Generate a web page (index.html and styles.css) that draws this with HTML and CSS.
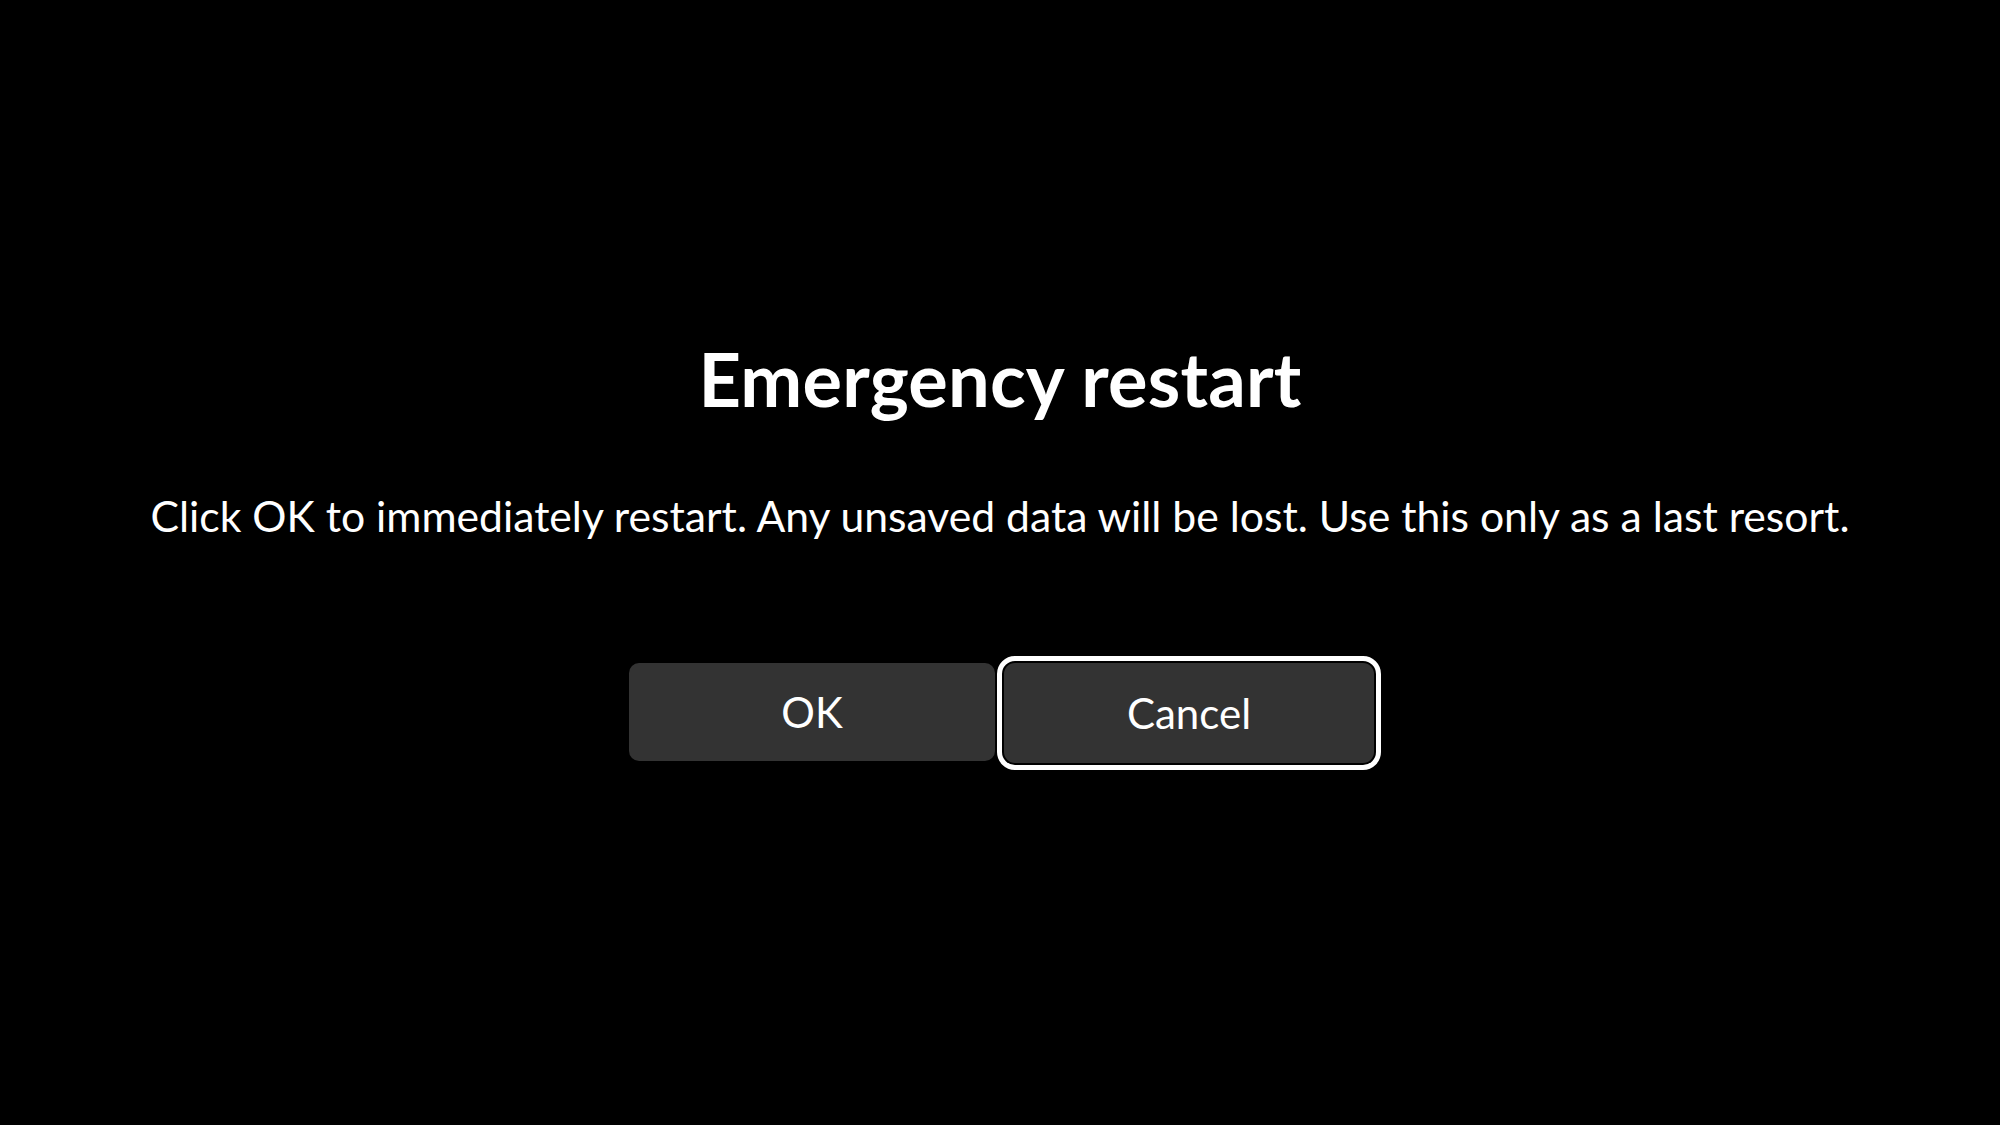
FILE: index.html
```html
<!DOCTYPE html>
<html lang="en">
<head>
<meta charset="utf-8">
<title>Emergency restart</title>
<link rel="stylesheet" href="styles.css">
</head>
<body>
<main class="screen">
  <h1 class="title">Emergency restart</h1>
  <p class="message">Click OK to immediately restart. Any unsaved data will be lost. Use this only as a last resort.</p>
  <div class="actions">
    <button class="btn btn-ok" type="button">OK</button>
    <button class="btn btn-cancel" type="button">Cancel</button>
  </div>
</main>
</body>
</html>
```
FILE: styles.css
```css
html, body {
  margin: 0;
  padding: 0;
  background: #000;
}
body {
  width: 2000px;
  height: 1125px;
  overflow: hidden;
  font-family: Lato, "Open Sans", sans-serif;
  color: #fff;
}
.screen {
  display: flex;
  flex-direction: column;
  align-items: center;
  padding-top: 335px;
}
.title {
  margin: 0;
  font-size: 74px;
  font-weight: 700;
  line-height: 1.2;
  letter-spacing: 0.2px;
}
.message {
  margin: 66px 0 0;
  font-size: 42.7px;
  font-weight: 400;
  line-height: 1.2;
  white-space: nowrap;
}
.actions {
  display: flex;
  align-items: flex-start;
  gap: 9px;
  margin-top: 122px;
  margin-left: 3px;
}
.btn {
  font-family: Lato, "Open Sans", sans-serif;
  font-size: 42px;
  line-height: 1.2;
  color: #fff;
  background: #333333;
  border: none;
  border-radius: 10px;
  padding: 0;
  display: flex;
  align-items: center;
  justify-content: center;
}
.btn-ok {
  width: 366px;
  height: 98px;
}
.btn-cancel {
  width: 370px;
  height: 100px;
  border-radius: 11px;
  outline: 5px solid #fff;
  outline-offset: 2px;
}
```
